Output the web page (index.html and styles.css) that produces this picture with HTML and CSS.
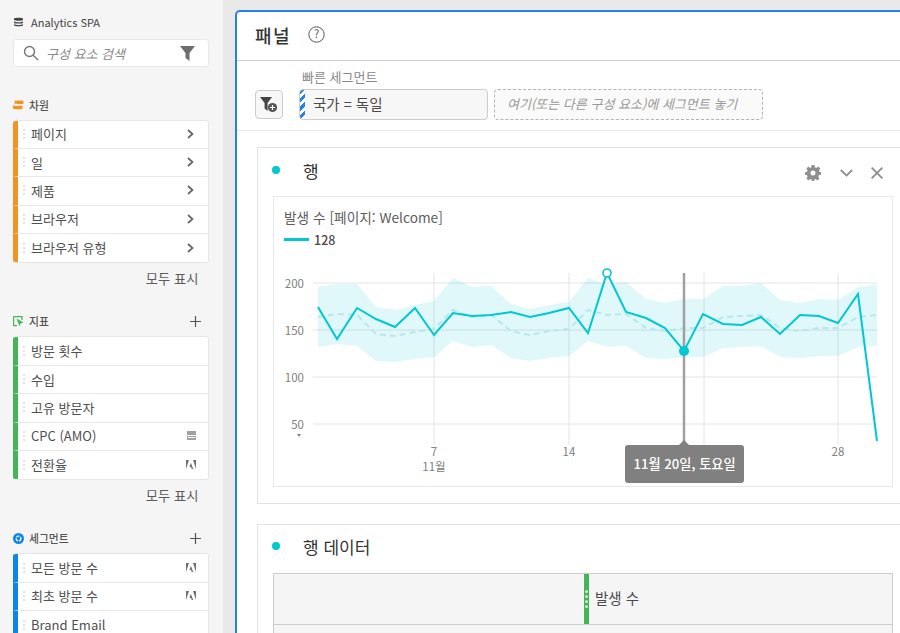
FILE: index.html
```html
<!DOCTYPE html>
<html lang="ko">
<head>
  <meta charset="UTF-8" />
  <title>Analytics SPA</title>
  <link rel="stylesheet" href="styles.css">
</head>
<body>

<aside class="rail">
  <div class="suite">
    <svg class="ic" width="11" height="10" viewBox="0 0 11 10"><path d="M1 1.5C1 .6 10 .6 10 1.5V3C10 4 1 4 1 3ZM1 4.4C3 5.4 8 5.4 10 4.4V6C10 6.8 1 6.8 1 6ZM1 7.2C3 8.2 8 8.2 10 7.2V8.4C10 9.4 1 9.4 1 8.4Z" fill="#444"/></svg>
    <span>Analytics SPA</span>
  </div>
  <div class="search">
    <svg width="16" height="16" viewBox="0 0 16 16" fill="none" stroke="#777" stroke-width="1.4"><circle cx="6.5" cy="6.5" r="5"/><path d="M10.2 10.2L15 15"/></svg>
    <span class="search-text">구성 요소 검색</span>
    <svg class="search-funnel" width="15" height="15" viewBox="0 0 15 15"><path d="M0 0H15L9.5 7V15L5.5 12V7Z" fill="#6e6e6e"/></svg>
  </div>

  <section class="group first">
    <div class="group-head">
      <svg width="11" height="10" viewBox="0 0 11 10"><path d="M1.5 1.2C3 .4 10.5 .4 10.5 1.2V3.6C10.5 4.3 3 4.3 1.5 3.6ZM0 5.4C2 6 9 6 9.5 5.4V8.4C9 9.6 1 9.6 0 8.4Z" fill="#f29423"/></svg>
      <b>차원</b>
    </div>
    <ul class="list orange">
      <li><i></i>페이지<svg class="chev" width="7" height="10" viewBox="0 0 7 10"><path d="M1 1L5.5 5L1 9" fill="none" stroke="#666" stroke-width="1.7"/></svg></li>
      <li><i></i>일<svg class="chev" width="7" height="10" viewBox="0 0 7 10"><path d="M1 1L5.5 5L1 9" fill="none" stroke="#666" stroke-width="1.7"/></svg></li>
      <li><i></i>제품<svg class="chev" width="7" height="10" viewBox="0 0 7 10"><path d="M1 1L5.5 5L1 9" fill="none" stroke="#666" stroke-width="1.7"/></svg></li>
      <li><i></i>브라우저<svg class="chev" width="7" height="10" viewBox="0 0 7 10"><path d="M1 1L5.5 5L1 9" fill="none" stroke="#666" stroke-width="1.7"/></svg></li>
      <li><i></i>브라우저 유형<svg class="chev" width="7" height="10" viewBox="0 0 7 10"><path d="M1 1L5.5 5L1 9" fill="none" stroke="#666" stroke-width="1.7"/></svg></li>
    </ul>
    <div class="show-all">모두 표시</div>
  </section>

  <section class="group">
    <div class="group-head">
      <svg width="11" height="11" viewBox="0 0 11 11"><path d="M.6.6H9V4M4 9.6H.6V.6" fill="none" stroke="#44b556" stroke-width="1.2"/><path d="M3.5 2.6L10.5 6.6L7.4 7.4L6.6 10.6Z" fill="#44b556"/></svg>
      <b>지표</b>
      <svg class="plus" width="11" height="11" viewBox="0 0 11 11"><path d="M5.5 0V11M0 5.5H11" stroke="#555" stroke-width="1.2"/></svg>
    </div>
    <ul class="list green">
      <li><i></i>방문 횟수</li>
      <li><i></i>수입</li>
      <li><i></i>고유 방문자</li>
      <li><i></i>CPC (AMO)<svg class="calc" width="9" height="9" viewBox="0 0 9 9"><path d="M0 0H9V4H0ZM0 5H9V9H0Z" fill="#a0a0a0"/><path d="M1 6.5H8" stroke="#fff"/></svg></li>
      <li><i></i>전환율<svg class="adobe" width="10" height="9" viewBox="0 0 10 9"><path d="M0 0H3L0 9ZM7 0H10V9ZM4.9 2.8L7.2 9H5.7L5 7H3.4Z" fill="#707070"/></svg></li>
    </ul>
    <div class="show-all">모두 표시</div>
  </section>

  <section class="group">
    <div class="group-head">
      <svg width="11" height="11" viewBox="0 0 11 11"><circle cx="5.5" cy="5.5" r="5.5" fill="#0d85ef"/><circle cx="5.5" cy="5.5" r="2.4" fill="none" stroke="#fff" stroke-width="1.3" stroke-dasharray="3 1"/></svg>
      <b>세그먼트</b>
      <svg class="plus" width="11" height="11" viewBox="0 0 11 11"><path d="M5.5 0V11M0 5.5H11" stroke="#555" stroke-width="1.2"/></svg>
    </div>
    <ul class="list blue">
      <li><i></i>모든 방문 수<svg class="adobe" width="10" height="9" viewBox="0 0 10 9"><path d="M0 0H3L0 9ZM7 0H10V9ZM4.9 2.8L7.2 9H5.7L5 7H3.4Z" fill="#707070"/></svg></li>
      <li><i></i>최초 방문 수<svg class="adobe" width="10" height="9" viewBox="0 0 10 9"><path d="M0 0H3L0 9ZM7 0H10V9ZM4.9 2.8L7.2 9H5.7L5 7H3.4Z" fill="#707070"/></svg></li>
      <li><i></i>Brand Email</li>
    </ul>
  </section>
</aside>

<main class="panel">
  <div class="panel-title">
    <h1>패널</h1>
    <svg width="17" height="17" viewBox="0 0 17 17"><circle cx="8.5" cy="8.5" r="7.7" fill="none" stroke="#555"/><text x="8.5" y="12.4" text-anchor="middle" class="help-mark">?</text></svg>
  </div>

  <div class="segments">
    <button class="seg-add">
      <svg width="18" height="16" viewBox="0 0 18 16"><path d="M0 0H12L7.6 6V14L4.6 11.6V6Z" fill="#444"/><circle cx="12.5" cy="10.5" r="4.6" fill="#555"/><path d="M12.5 8V13M10 10.5H15" stroke="#fff" stroke-width="1.2"/></svg>
    </button>
    <div class="seg-col">
      <div class="seg-label">빠른 세그먼트</div>
      <div class="seg-row">
        <div class="seg-pill">국가 = 독일</div>
        <div class="seg-drop">여기(또는 다른 구성 요소)에 세그먼트 놓기</div>
      </div>
    </div>
  </div>

  <div class="canvas">
    <section class="card">
      <div class="card-head">
        <span class="dot"></span>
        <h2>행</h2>
        <div class="card-tools">
          <svg width="16" height="16" viewBox="0 0 16 16"><path d="M6.6 0H9.4L9.8 2.2L11.4 2.9L13.3 1.6L15.3 3.6L13.9 5.4L14.6 7L16 7.3V9.7L14 10.1L13.3 11.7L14.5 13.5L12.5 15.4L10.7 14.1L9.3 14.7L9 16H7L6.6 14.7L5.1 14.1L3.4 15.4L1.4 13.4L2.6 11.7L1.9 10.1L0 9.7V7.3L1.9 6.9L2.6 5.4L1.4 3.6L3.4 1.6L5.2 2.9L6.4 2.3Z M8 5.5A2.5 2.5 0 1 0 8 10.5A2.5 2.5 0 1 0 8 5.5Z" fill="#8e8e8e" fill-rule="evenodd"/></svg>
          <svg width="13" height="8" viewBox="0 0 13 8"><path d="M.8 1L6.5 6.6L12.2 1" fill="none" stroke="#8e8e8e" stroke-width="1.8"/></svg>
          <svg width="12" height="12" viewBox="0 0 12 12"><path d="M.6.6L11.4 11.4M11.4.6L.6 11.4" stroke="#8e8e8e" stroke-width="1.8"/></svg>
        </div>
      </div>

      <div class="chart">
        <div class="chart-title">발생 수 [페이지: Welcome]</div>
        <div class="legend"><span class="legend-line"></span><b>128</b></div>
        <svg class="plot" width="618" height="225" viewBox="274 262 618 225">
          <g class="grid">
            <path d="M313 283H877M313 330H877M313 377H877M313 424H877"/>
            <path d="M434 273V445M569 273V445M704 273V445M838 273V445"/>
          </g>
          <polygon class="band" points="318,287 337,284 357,284 376,307 395,310 415,305 434,301 453,278 472,287 491,286 511,304 530,309 549,305 569,302 588,278 607,284 626,282 646,299 665,303 684,299 703,299 723,286 742,286 761,283 780,300 800,303 819,299 838,300 858,287 877,284 877,346 858,347 838,356 819,356 800,358 780,357 761,346 742,347 723,348 703,357 684,357 665,359 646,358 626,346 607,347 588,341 569,356 549,358 530,361 511,358 491,345 472,347 453,341 434,357 415,359 395,362 376,361 357,346 337,344 318,347"/>
          <polyline class="mean" points="318,317 337,314 357,315 376,334 395,336 415,332 434,329 453,310 472,317 491,315 511,331 530,335 549,331 569,329 588,310 607,315 626,314 646,328 665,331 684,328 703,328 723,317 742,316 761,315 780,328 800,331 819,328 838,328 858,317 877,315"/>
          <path class="marker" d="M684 273V445"/>
          <polyline class="line" points="318,307 337,339 357,308 376,319 395,327 415,308 434,335 453,313 472,316 491,315 511,312 530,317 549,313 569,308 588,333 607,273 626,312 646,318 665,328 684,351 703,314 723,324 742,325 761,317 780,334 800,315 819,316 838,323 858,294 877,441"/>
          <circle class="peak" cx="607" cy="273" r="4"/>
          <circle class="hit" cx="684" cy="351" r="5"/>
          <g class="axis">
            <text x="304" y="288" text-anchor="end">200</text>
            <text x="304" y="335" text-anchor="end">150</text>
            <text x="304" y="382" text-anchor="end">100</text>
            <text x="304" y="429" text-anchor="end">50</text>
            <text x="434" y="456" text-anchor="middle">7</text>
            <text x="434" y="471" text-anchor="middle">11월</text>
            <text x="569" y="456" text-anchor="middle">14</text>
            <text x="704" y="456" text-anchor="middle">21</text>
            <text x="838" y="456" text-anchor="middle">28</text>
          </g>
          <path class="tick" d="M297 434H301L299 437Z"/>
        </svg>
        <div class="tip">11월 20일, 토요일</div>
      </div>
    </section>

    <section class="card">
      <div class="card-head short">
        <span class="dot"></span>
        <h2>행 데이터</h2>
      </div>
      <div class="table">
        <div class="table-head">
          <div class="table-corner"></div>
          <div class="table-col"><span class="col-bar"><i></i><i></i><i></i><i></i></span><span class="col-name">발생 수</span></div>
        </div>
        <div class="table-row">페이지</div>
      </div>
    </section>
  </div>
</main>

</body>
</html>
```

FILE: styles.css
```css
* {
  box-sizing: border-box;
}
html, body {
  height: 633px;
  overflow: hidden;
}
body {
  margin: 0;
  display: flex;
  font-family: "Noto Sans CJK KR", "Noto Sans", sans-serif;
  background: #e9e9e9;
  color: #4b4b4b;
}

/* left rail */
.rail {
  flex: none;
  width: 223px;
  height: 633px;
  padding: 0 14.5px 0 13px;
  background: #f5f5f5;
  overflow: hidden;
}
.suite {
  display: flex;
  align-items: center;
  gap: 7px;
  height: 20px;
  margin-top: 12px;
  font-size: 11px;
  color: #444;
}
.search {
  display: flex;
  align-items: center;
  height: 28px;
  margin-top: 7px;
  padding: 0 13px 0 9px;
  background: #fff;
  border: 1px solid #e8e8e8;
  border-radius: 3px;
}
.search-text {
  margin-left: 7px;
  font-size: 13px;
  font-style: italic;
  color: #8a8a8a;
}
.search-funnel {
  margin-left: auto;
}
.group {
  margin-top: 17px;
}
.group.first {
  margin-top: 29.5px;
}
.group-head {
  display: flex;
  align-items: center;
  gap: 5px;
  height: 16px;
  margin-bottom: 7px;
}
.group-head b {
  font-size: 10.8px;
  font-weight: 500;
  color: #555;
}
.plus {
  margin-left: auto;
  margin-right: 8px;
}
.list {
  margin: 0;
  padding: 0;
  list-style: none;
  background: #fff;
  border: 1px solid #e6e6e6;
  border-left: 0;
  border-radius: 3px;
  overflow: hidden;
}
.list li {
  position: relative;
  display: flex;
  align-items: center;
  height: 28.4px;
  padding: 0 0 1px 13px;
  font-size: 13px;
  color: #505050;
  border-left: 5px solid #999;
  border-bottom: 1px solid #e8e8e8;
}
.list li:last-child {
  border-bottom: 0;
}
.list li i {
  width: 2px;
  height: 10px;
  margin-left: -8px;
  margin-right: 6px;
  background: repeating-linear-gradient(#e2e2e2 0 2px, transparent 2px 4px);
}
.orange li {
  border-left-color: #f29423;
}
.green li {
  border-left-color: #44b556;
}
.blue li {
  border-left-color: #0d85ef;
}
.chev {
  margin-left: auto;
  margin-right: 14px;
}
.calc,
.adobe {
  margin-left: auto;
  margin-right: 12px;
}
.show-all {
  height: 33px;
  padding: 6px 10px 0 0;
  text-align: right;
  font-size: 13.3px;
  color: #5c5c5c;
}

/* panel */
.panel {
  flex: none;
  width: 695px;
  height: 640px;
  margin: 10px 0 0 12px;
  background: #fff;
  border: 2px solid #2680eb;
  border-bottom: 0;
  border-radius: 5px 0 0 0;
}
.panel-title {
  display: flex;
  align-items: center;
  gap: 17px;
  height: 49px;
  padding: 0 0 3px 18px;
  border-bottom: 1px solid #cfcfcf;
}
.panel-title h1 {
  margin: 0;
  font-size: 18px;
  font-weight: 500;
  color: #333;
  letter-spacing: 1.5px;
}
.help-mark {
  font-size: 11px;
  fill: #555;
}
.segments {
  display: flex;
  align-items: flex-end;
  gap: 16px;
  height: 70px;
  padding: 0 0 10px 18px;
  border-bottom: 1px solid #e8e8e8;
}
.seg-add {
  display: flex;
  align-items: center;
  justify-content: center;
  width: 28px;
  height: 29px;
  margin-bottom: 1px;
  padding: 0;
  background: #f7f7f7;
  border: 1px solid #ccc;
  border-radius: 4px;
}
.seg-label {
  margin: 0 0 4px 3px;
  font-size: 13px;
  line-height: 17px;
  color: #8a8a8a;
}
.seg-row {
  display: flex;
  gap: 6px;
}
.seg-pill {
  width: 189px;
  height: 31px;
  padding-left: 13px;
  line-height: 28px;
  font-size: 14.5px;
  color: #4b4b4b;
  background: repeating-linear-gradient(135deg, #2680eb 0 3px, #fff 3px 6px) left / 5px 100% no-repeat, #f7f7f7;
  border: 1px solid #ccc;
  border-radius: 4px;
}
.seg-drop {
  width: 269px;
  height: 31px;
  padding-left: 12px;
  line-height: 28px;
  font-size: 13px;
  font-style: italic;
  color: #999;
  background: #fafafa;
  border: 1px dashed #b3b3b3;
  border-radius: 4px;
}
.canvas {
  padding: 16px 20px 0;
}
.card {
  margin-bottom: 20px;
  background: #fff;
  border: 1px solid #e1e1e1;
}
.card-head {
  display: flex;
  align-items: center;
  height: 48px;
  padding: 0 0 4px 14px;
}
.card-head.short {
  padding-bottom: 6px;
}
.short h2 {
  font-size: 17.5px;
}
.dot {
  width: 8px;
  height: 8px;
  margin-right: 23px;
  background: #00c7d1;
  border-radius: 50%;
}
.card-head h2 {
  margin: 0;
  font-size: 17px;
  font-weight: 400;
  color: #333;
}
.card-tools {
  display: flex;
  align-items: center;
  gap: 18.5px;
  margin: 6px 0 0 auto;
  padding-right: 24px;
}
.chart {
  position: relative;
  height: 291px;
  margin: 0 14px 16px 15px;
  padding: 10px 0 0 10px;
  border: 1px solid #e8e8e8;
}
.chart-title {
  font-size: 13.7px;
  line-height: 20px;
  color: #5c5c5c;
}
.legend {
  display: flex;
  align-items: center;
  gap: 5px;
  height: 20px;
  margin-top: 2px;
  font-size: 12.5px;
  color: #4b4b4b;
}
.legend b {
  font-weight: 500;
}
.legend-line {
  width: 25px;
  height: 3px;
  background: #00c7d1;
}
.plot {
  position: absolute;
  left: 0;
  top: 65px;
}
.grid path {
  fill: none;
  stroke: #e4e4e4;
  stroke-width: 1;
}
.band {
  fill: #00c7d1;
  fill-opacity: 0.12;
}
.mean {
  fill: none;
  stroke: #b4e8ec;
  stroke-width: 2;
  stroke-dasharray: 6 4;
}
.marker {
  fill: none;
  stroke: #a0a0a0;
  stroke-width: 2.5;
}
.line {
  fill: none;
  stroke: #00c7d1;
  stroke-width: 2;
  stroke-linejoin: miter;
}
.peak {
  fill: #fff;
  stroke: #00c7d1;
  stroke-width: 1.6;
}
.hit {
  fill: #00c7d1;
}
.axis text {
  font-size: 11.5px;
  fill: #808080;
}
.tick {
  fill: #808080;
}
.tip {
  position: absolute;
  left: 351px;
  top: 248px;
  width: 119px;
  height: 38px;
  text-align: center;
  line-height: 37px;
  font-size: 13.2px;
  font-weight: 500;
  color: #fff;
  background: #808080;
  border-radius: 3px;
}
.tip::before {
  content: "";
  position: absolute;
  left: 54px;
  top: -5px;
  border-left: 5px solid transparent;
  border-right: 5px solid transparent;
  border-bottom: 5px solid #808080;
}

/* table */
.table {
  margin: 0 14px 0 15px;
  background: #f5f5f5;
  border: 1px solid #ccc;
}
.table-head {
  display: flex;
  height: 51px;
  border-bottom: 1px solid #ccc;
}
.table-corner {
  width: 310px;
}
.table-col {
  display: flex;
  align-items: center;
  gap: 6px;
  font-size: 14.5px;
  color: #4b4b4b;
}
.col-name {
  padding-bottom: 4px;
}
.col-bar {
  display: flex;
  flex-direction: column;
  align-items: center;
  justify-content: center;
  gap: 2px;
  width: 5px;
  height: 100%;
  background: #44b556;
}
.col-bar i {
  width: 3px;
  height: 3px;
  background: #cfe9d3;
  border-radius: 50%;
}
.table-row {
  padding: 4px 10px;
  font-size: 12.5px;
  font-weight: 700;
  color: #333;
}
```
